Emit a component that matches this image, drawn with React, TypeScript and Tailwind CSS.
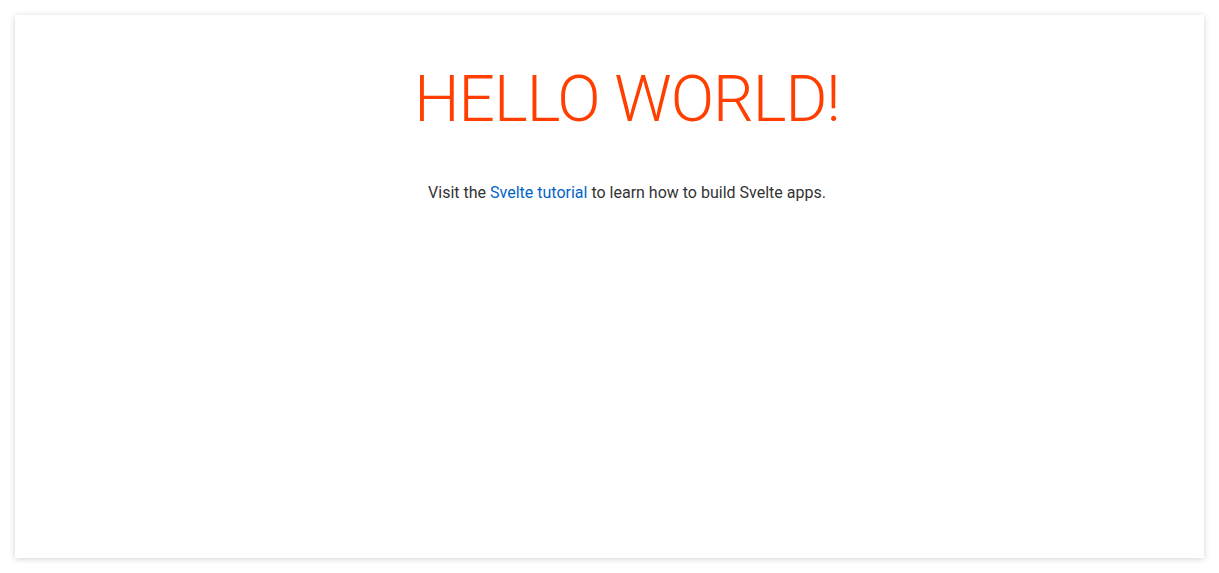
export default function App() {
  return (
    <div className="h-[573px] w-full bg-white p-[15px]">
      <div className="h-full w-full bg-white shadow-[0_1px_6px_rgba(0,0,0,0.18)] flex flex-col items-center text-center pl-[35px]">
        <h1 className="mt-[53px] text-[64px] leading-[64px] font-light uppercase tracking-[-1px] text-[#ff3e00] font-['Roboto',sans-serif]">
          Hello world!
        </h1>
        <p className="mt-[51px] text-[16px] leading-[20px] text-[#333] font-['Roboto',sans-serif]">
          Visit the <a className="text-[#0064c8]" href="#">Svelte tutorial</a> to learn how to build Svelte apps.
        </p>
      </div>
    </div>
  );
}
